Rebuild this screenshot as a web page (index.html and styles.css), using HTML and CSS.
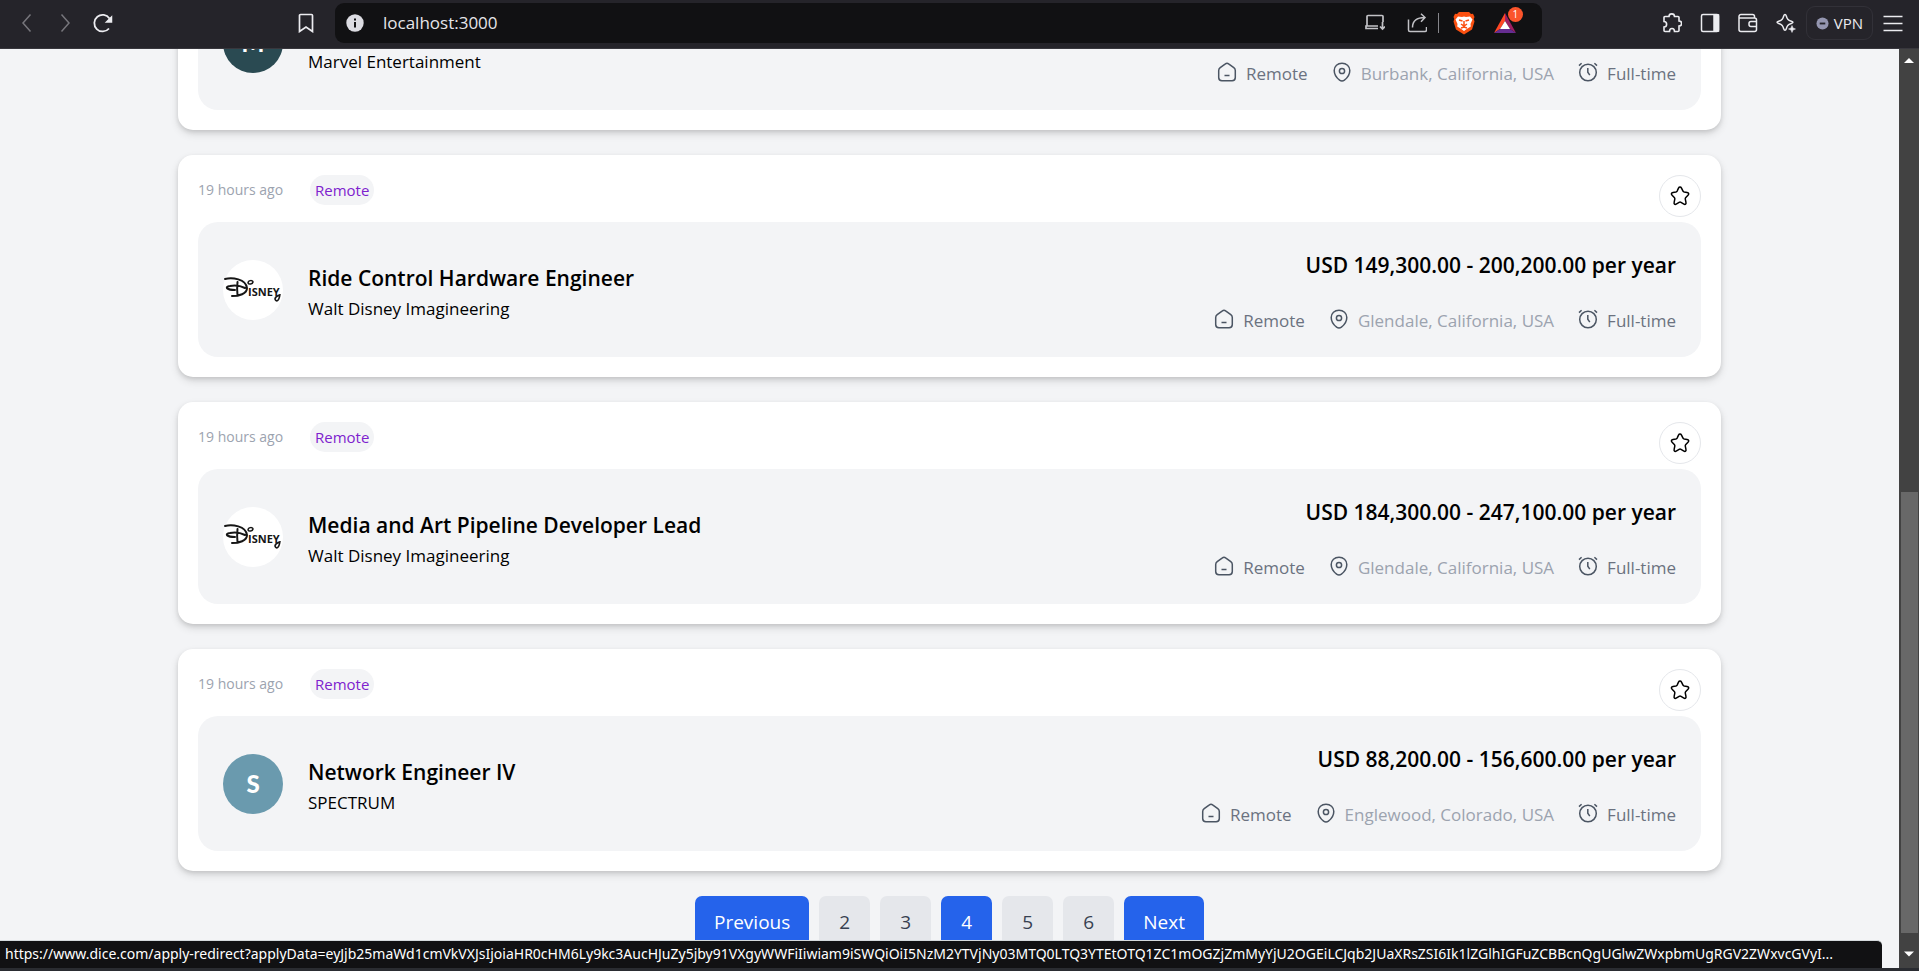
FILE: index.html
```html
<!DOCTYPE html>
<html lang="en">
<head>
<meta charset="utf-8">
<title>localhost:3000</title>
<link rel="stylesheet" href="styles.css">
</head>
<body>
<svg class="sprite" aria-hidden="true">
  <symbol id="i-home" viewBox="0 0 20 20"><path d="M10 1.200c.6 0 1.100.2 1.600.6l5.200 3.900c.9.7 1.500 1.700 1.500 2.900v6.900c0 1.900-1.300 3.200-3.200 3.200H4.900c-1.900 0-3.200-1.300-3.200-3.200V8.600c0-1.200.6-2.200 1.500-2.900l5.200-3.900c.5-.4 1-.6 1.600-.6zM7.500 13.500h5"/></symbol>
  <symbol id="i-pin" viewBox="0 0 20 20"><path d="M10 1.200c4.400 0 7.800 3 7.800 7.200 0 4.300-2.700 7.600-5.400 9.700-1.500 1.100-3.300 1.100-4.800 0-2.700-2.100-5.400-5.400-5.400-9.700 0-4.200 3.400-7.200 7.800-7.200z"/><circle cx="10" cy="9" r="2.600"/></symbol>
  <symbol id="i-clock" viewBox="0 0 20 20"><circle cx="10" cy="10.500" r="8.300"/><path d="M9.800 6v4.300l2 2.800M1 3.600l2.600-2.300M19 3.600l-2.600-2.300"/></symbol>
  <symbol id="i-star" viewBox="0 0 20 20"><path d="M8.500 2.100c.7-1.400 2.300-1.400 3 0l1.500 3c.2.400.7.800 1.200.9l2.900.5c1.700.3 2.100 1.600.9 2.800l-2.200 2.200c-.4.4-.6 1.200-.5 1.700l.6 2.900c.5 2.100-.6 2.900-2.400 1.800l-2.500-1.500c-.5-.3-1.400-.3-1.900 0l-2.500 1.500c-1.800 1.100-2.900.3-2.400-1.800l.6-2.900c.1-.5-.1-1.300-.5-1.700L2.100 9.300C.9 8.100 1.300 6.800 3 6.500L5.900 6c.5-.1 1-.5 1.200-.9z"/></symbol>
  <symbol id="i-disney" viewBox="0 0 60 60"><path d="M2 19c7-2 21 0 22 9 0 6-8 8-15 8M12 30c-8 0-11-3-5-4 5-1 11 0 15 2M14.500 22c-.5 5-.5 9 0 13" fill="none" stroke="#161616" stroke-width="2" stroke-linecap="round"/><path d="M25 23c0-3 5-3 5-1-.5 2-4 3-5 1z" fill="none" stroke="#161616" stroke-width="1.500"/><path d="M57 34c-1 8-4 8-5 5 0-2 2-3 4-4" fill="none" stroke="#161616" stroke-width="1.600"/><text x="25" y="36" class="disney-word">ısney</text></symbol>
</svg>

<header class="toolbar">
  <div class="tools tools-left">
    <button class="tool dim" aria-label="Back"><svg viewBox="0 0 20 20"><path d="M13.500 1.500L6 10l7.500 8.500"/></svg></button>
    <button class="tool dim" aria-label="Forward"><svg viewBox="0 0 20 20"><path d="M6.500 1.500L14 10l-7.500 8.500"/></svg></button>
    <button class="tool" aria-label="Reload"><svg viewBox="0 0 20 20"><path d="M16 15.500A8.300 8.300 0 1 1 16.500 5.500" stroke-width="1.800"/><path d="M18.500 4v5H13.500z" fill="currentColor"/></svg></button>
    <button class="tool bookmark" aria-label="Bookmark"><svg viewBox="0 0 20 20"><path d="M4.500 1.500h11a1 1 0 0 1 1 1v16L10 14l-6.500 4.500v-16a1 1 0 0 1 1-1z" stroke-width="1.700"/></svg></button>
  </div>
  <div class="address">
    <svg class="info" viewBox="0 0 20 20"><circle cx="10" cy="10" r="8.700" fill="#dcdce2"/><path d="M10 9v5.500M10 5.500v2" stroke="#111113" stroke-width="2"/></svg>
    <input class="url" type="text" value="localhost:3000" aria-label="Address">
    <button class="tool grey" aria-label="Install app"><svg viewBox="0 0 20 20"><path d="M18 9V3.500a1 1 0 0 0-1-1H3a1 1 0 0 0-1 1V13M13 13H1v2.500h12M17.500 9v7M15 13.500l2.500 2.500 2.500-2.500" stroke-width="1.700"/></svg></button>
    <button class="tool grey share" aria-label="Share"><svg viewBox="0 0 20 20"><path d="M1.500 6.500V17a1.500 1.500 0 0 0 1.500 1.500h15a1.500 1.500 0 0 0 1.500-1.500v-3M5.500 14.500c0-6 4-10 12.500-10M14 .8l4 3.700-4 4.200" stroke-width="1.500"/></svg></button>
    <span class="rule"></span>
    <button class="tool shield" aria-label="Shields"><svg viewBox="0 0 22 24"><path d="M6 1h10l2 2 2-.2L21.500 6l-.8 2 .8 2.500-2.500 8L11 23.500 3 18.500.5 10.500 1.300 8 .5 6 2 2.800 4 3z" fill="#fb5010" stroke="none"/><path d="M5 5.500l4 .5 2-.5 2 .5 4-.5 2.500 3-2 4.500.3 2.500-3.300 2L11 20l-3.500-2.500-3.300-2 .3-2.500-2-4.500z" fill="#fff" stroke="none"/><path d="M6 9l3.500 1M16 9l-3.500 1M11 10v4M8 13l3 2 3-2M8 17l3-1 3 1" stroke="#fb5010" stroke-width="1.500"/></svg></button>
    <button class="tool rewards" aria-label="Rewards"><svg viewBox="0 0 22 20"><path d="M11 0L0 20l6-4 5-8z" fill="#ff4724" stroke="none"/><path d="M11 0l11 20-6-4-5-8z" fill="#9e1f63" stroke="none"/><path d="M0 20h22l-6-4H6z" fill="#662d91" stroke="none"/><path d="M11 8l5 8H6z" fill="#fff" stroke="none"/></svg><span class="badge">1</span></button>
  </div>
  <div class="tools tools-right">
    <button class="tool" aria-label="Extensions"><svg viewBox="0 0 20 20"><path d="M2 4.500a1 1 0 0 1 1-1h4C7 0 12.500 0 12.500 3.500H16a1 1 0 0 1 1 1V8c3.500 0 3.500 5 0 5v4.500a1 1 0 0 1-1 1h-3.500c0-4-5-4-5 0H3a1 1 0 0 1-1-1V14c3.500 0 3.500-5.500 0-5.500z" stroke-width="1.600"/></svg></button>
    <button class="tool" aria-label="Sidebar"><svg viewBox="0 0 20 20"><rect x="1.500" y="1.500" width="17" height="17" rx="1.500"/><path d="M14 2h4.500v16H14z" fill="currentColor"/></svg></button>
    <button class="tool" aria-label="Wallet"><svg viewBox="0 0 20 20"><path d="M16.500 5V3.500a2 2 0 0 0-2-2H3a2 2 0 0 0-2 2v13a2 2 0 0 0 2 2h13.500a2 2 0 0 0 2-2V7a2 2 0 0 0-2-2H1M19 8.500h-6a2 2 0 0 0-2 2v1a2 2 0 0 0 2 2h6"/></svg></button>
    <button class="tool" aria-label="Leo AI"><svg viewBox="0 0 20 20"><path d="M9 1.500c.8 0 1 .6 1.300 1.500.9 3 1.400 4 5 5.200 2.200.7 2.200 1.600 0 2.300-3.600 1.200-4.100 2.200-5 5.200-.6 1.900-2 1.900-2.600 0-.9-3-1.400-4-5-5.200-2.200-.7-2.200-1.600 0-2.300 3.600-1.200 4.100-2.200 5-5.200.3-.9.500-1.500 1.300-1.500z"/><path d="M16 12.500l1 2.500 2.500 1-2.500 1-1 2.500-1-2.500-2.500-1 2.500-1z" fill="currentColor" stroke-width=".5"/></svg></button>
    <button class="vpn"><svg viewBox="0 0 14 14"><circle cx="7" cy="7" r="6.500" fill="#9496b0"/><path d="M4 7h6" stroke="#25242a" stroke-width="2"/></svg>VPN</button>
    <button class="tool" aria-label="Menu"><svg viewBox="0 0 20 20"><path d="M.5 3.500h19M.5 10.500h19M.5 17.500h19" stroke-width="1.500"/></svg></button>
  </div>
</header>

<div class="window">
  <main class="page">
    <article class="card">
      <section class="job">
        <div class="avatar marvel">M</div>
        <div class="who"><h2></h2><p>Marvel Entertainment</p></div>
        <div class="terms">
          <p class="pay"></p>
          <ul class="facts">
            <li><svg><use href="#i-home"/></svg>Remote</li>
            <li class="place"><svg><use href="#i-pin"/></svg>Burbank, California, USA</li>
            <li><svg><use href="#i-clock"/></svg>Full-time</li>
          </ul>
        </div>
      </section>
    </article>

    <article class="card">
      <div class="meta"><time>19 hours ago</time><span class="tag">Remote</span><button class="save" aria-label="Save job"><svg><use href="#i-star"/></svg></button></div>
      <section class="job">
        <div class="avatar logo"><svg role="img" aria-label="Disney"><use href="#i-disney"/></svg></div>
        <div class="who"><h2>Ride Control Hardware Engineer</h2><p>Walt Disney Imagineering</p></div>
        <div class="terms">
          <p class="pay">USD 149,300.00 - 200,200.00 per year</p>
          <ul class="facts">
            <li><svg><use href="#i-home"/></svg>Remote</li>
            <li class="place"><svg><use href="#i-pin"/></svg>Glendale, California, USA</li>
            <li><svg><use href="#i-clock"/></svg>Full-time</li>
          </ul>
        </div>
      </section>
    </article>

    <article class="card">
      <div class="meta"><time>19 hours ago</time><span class="tag">Remote</span><button class="save" aria-label="Save job"><svg><use href="#i-star"/></svg></button></div>
      <section class="job">
        <div class="avatar logo"><svg role="img" aria-label="Disney"><use href="#i-disney"/></svg></div>
        <div class="who"><h2>Media and Art Pipeline Developer Lead</h2><p>Walt Disney Imagineering</p></div>
        <div class="terms">
          <p class="pay">USD 184,300.00 - 247,100.00 per year</p>
          <ul class="facts">
            <li><svg><use href="#i-home"/></svg>Remote</li>
            <li class="place"><svg><use href="#i-pin"/></svg>Glendale, California, USA</li>
            <li><svg><use href="#i-clock"/></svg>Full-time</li>
          </ul>
        </div>
      </section>
    </article>

    <article class="card">
      <div class="meta"><time>19 hours ago</time><span class="tag">Remote</span><button class="save" aria-label="Save job"><svg><use href="#i-star"/></svg></button></div>
      <section class="job">
        <div class="avatar spectrum">S</div>
        <div class="who"><h2>Network Engineer IV</h2><p>SPECTRUM</p></div>
        <div class="terms">
          <p class="pay">USD 88,200.00 - 156,600.00 per year</p>
          <ul class="facts">
            <li><svg><use href="#i-home"/></svg>Remote</li>
            <li class="place"><svg><use href="#i-pin"/></svg>Englewood, Colorado, USA</li>
            <li><svg><use href="#i-clock"/></svg>Full-time</li>
          </ul>
        </div>
      </section>
    </article>

    <nav class="pager" aria-label="Pages">
      <button class="primary">Previous</button>
      <button>2</button>
      <button>3</button>
      <button class="primary" aria-current="page">4</button>
      <button>5</button>
      <button>6</button>
      <button class="primary">Next</button>
    </nav>
  </main>
  <div class="scrollbar" aria-hidden="true">
    <svg viewBox="0 0 20 20"><path d="M5 14l5-5 5 5z" fill="#fff"/></svg>
    <div class="track"><div class="thumb"></div></div>
    <svg class="down" viewBox="0 0 20 20"><path d="M5 11l5 5 5-5z" fill="#fff"/></svg>
  </div>
  <div class="status">https://www.dice.com/apply-redirect?applyData=eyJjb25maWd1cmVkVXJsIjoiaHR0cHM6Ly9kc3AucHJuZy5jby91VXgyWWFiIiwiam9iSWQiOiI5NzM2YTVjNy03MTQ0LTQ3YTEtOTQ1ZC1mOGZjZmMyYjU2OGEiLCJqb2JUaXRsZSI6Ik1lZGlhIGFuZCBBcnQgUGlwZWxpbmUgRGV2ZWxvcGVyI...</div>
</div>
</body>
</html>
```
FILE: styles.css
```css
* { box-sizing: border-box; }

body {
  margin: 0;
  height: 100vh;
  display: flex;
  flex-direction: column;
  overflow: hidden;
  border-bottom: 3px solid #2a2c31;
  font-family: "Open Sans", "Noto Sans", sans-serif;
  font-size: 17px;
  background: #f3f4f6;
  color: #000;
}

h2, p, ul { margin: 0; padding: 0; }
button { font: inherit; border: 0; padding: 0; }
svg { display: block; fill: none; }
.sprite { position: absolute; width: 0; height: 0; }

/* Browser toolbar */
.toolbar {
  display: flex;
  flex: none;
  height: 49px;
  padding: 3px 0 5px;
  background: #25242a;
  border-bottom: 1px solid #38373d;
  color: #ececf0;
}
.tools { display: flex; align-items: center; gap: 18px; }
.tools-left { width: 335px; padding: 0 19px 0 17px; }
.tools-right { padding: 0 16px 0 120px; }
.tool { flex: none; width: 20px; height: 20px; background: none; color: inherit; }
.tool svg { width: 20px; height: 20px; stroke: currentColor; stroke-width: 1.500; }
.dim { color: #77767c; }
.grey { color: #c2c2c6; }
.bookmark { margin-left: auto; }
.address {
  flex: 1;
  display: flex;
  align-items: center;
  padding: 0 26px 0 10px;
  border-radius: 9px;
  background: #111113;
}
.info { width: 20px; height: 20px; }
.url {
  flex: 1;
  min-width: 0;
  height: 28px;
  margin-left: 18px;
  padding: 0;
  border: 0;
  background: none;
  color: #e6e6ea;
  font: inherit;
  line-height: 28px;
}
.share { margin-left: 22px; }
.rule { width: 1px; height: 20px; margin: 0 14px 0 11px; background: #86868b; }
.shield, .shield svg { width: 22px; height: 24px; }
.rewards { position: relative; margin-left: 19px; }
.rewards, .rewards svg { width: 22px; }
.badge {
  position: absolute;
  top: -6px;
  right: -7px;
  width: 15px;
  border-radius: 8px;
  background: #fb542b;
  color: #fff;
  font-size: 10px;
  line-height: 15px;
}
.vpn {
  display: flex;
  align-items: center;
  gap: 5px;
  height: 34px;
  margin: 0 -8px;
  padding: 0 9px;
  border: 1px solid #323138;
  border-radius: 9px;
  background: none;
  color: #ececf0;
  font-size: 15px;
}
.vpn svg { width: 13px; height: 13px; }

/* Viewport: the page rests at the end of its scroll */
.window { position: relative; flex: 1; min-height: 0; display: flex; }
.page {
  flex: 1;
  display: flex;
  flex-direction: column;
  justify-content: flex-end;
  gap: 25px;
  padding: 0 178px 20px;
  overflow: hidden;
}

.card {
  flex: none;
  padding: 20px;
  border-radius: 15px;
  background: #fff;
  box-shadow: 0 4px 8px rgba(0, 0, 0, .12), 0 2px 4px rgba(0, 0, 0, .1);
}
.meta { display: flex; align-items: flex-start; height: 47px; font-size: 15px; line-height: 30px; }
.meta time { width: 112px; font-size: 14px; color: #9ca3af; }
.tag { padding: 0 5px; border-radius: 15px; background: #f3f4f6; color: #7e22ce; }
.save {
  display: grid;
  place-items: center;
  width: 42px;
  height: 42px;
  margin-left: auto;
  border: 1px solid #e5e7eb;
  border-radius: 50%;
  background: #fff;
}
.save svg { width: 20px; height: 20px; stroke: #000; stroke-width: 1.500; }

.job {
  display: flex;
  align-items: center;
  height: 135px;
  padding: 0 25px;
  border-radius: 20px;
  background: #f3f4f6;
}
.avatar {
  display: grid;
  place-items: center;
  width: 60px;
  height: 60px;
  margin-right: 25px;
  border-radius: 50%;
  color: #fff;
  font: 900 24px "Lato", sans-serif;
}
.marvel { background: #2a4a52; }
.spectrum { background: #6a9aae; }
.logo { background: #fff; }
.logo svg { width: 60px; height: 60px; }
.disney-word { font: 700 15px "Open Sans", sans-serif; font-variant: small-caps; fill: #161616; }
.who { flex: 1; padding-top: 4px; }
.who h2 { min-height: 34px; font-size: 21px; font-weight: 600; line-height: 34px; }
.who p { line-height: 28px; }
.terms { padding-top: 6px; }
.pay { height: 30px; margin-bottom: 27px; font-size: 21px; font-weight: 600; line-height: 30px; text-align: right; }
.facts { display: flex; justify-content: flex-end; gap: 24px; list-style: none; line-height: 28px; color: #6b7280; }
.facts li { display: flex; gap: 9px; }
.facts svg { width: 20px; height: 20px; margin-top: 2px; stroke: #4b5563; stroke-width: 1.500; }
.facts .place { color: #9ca3af; }

.pager { display: flex; flex: none; justify-content: center; gap: 10px; }
.pager button {
  min-width: 51px;
  height: 52px;
  padding: 0 19px;
  border-radius: 7px;
  background: #e5e7eb;
  color: #374151;
  font-size: 19px;
}
.pager .primary { background: #2563eb; color: #fff; }

/* Scroll bar */
.scrollbar { display: flex; flex-direction: column; width: 20px; background: #424242; }
.track { flex: 1; display: flex; flex-direction: column; justify-content: flex-end; padding: 0 1px 0 2px; }
.thumb { height: 51%; background: #686868; }
.scrollbar svg { width: 20px; height: 20px; }
.scrollbar .down { height: 35px; }

/* Link target shown over the page */
.status {
  position: absolute;
  left: 0;
  bottom: 0;
  width: calc(100% - 37px);
  height: 28px;
  padding: 0 5px;
  border-top: 1px solid #d5dadd;
  border-top-right-radius: 5px;
  background: #111113;
  color: #fff;
  font-family: "Noto Sans", "Open Sans", sans-serif;
  font-size: 14px;
  line-height: 26px;
  white-space: nowrap;
  overflow: hidden;
}
```
